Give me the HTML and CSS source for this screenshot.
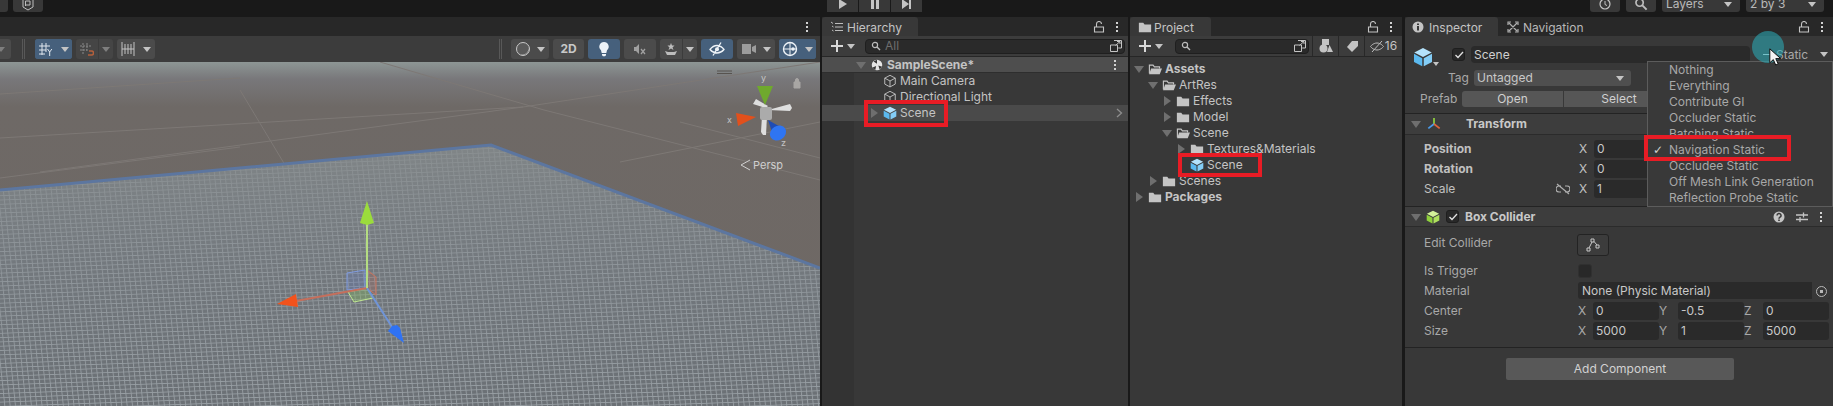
FILE: index.html
```html
<!DOCTYPE html>
<html lang="en">
<head>
<meta charset="utf-8">
<title>Unity Editor</title>
<link rel="stylesheet" href="styles.css">
</head>
<body>
<svg class="defs" width="0" height="0" aria-hidden="true">
  <defs>
    <symbol id="cube-blue" viewBox="0 0 16 16">
      <path fill="#b4e2fb" d="M8 .8 15 4.400 8 8 1 4.400z"/>
      <path fill="#5bb9ef" d="M.8 5.400 7.400 8.900v6.500L.8 12z"/>
      <path fill="#83cdf6" d="M15.200 5.400 8.600 8.900v6.500l6.600-3.400z"/>
    </symbol>
    <symbol id="cube-green" viewBox="0 0 16 16">
      <path fill="#d3f29a" d="M8 .8 15 4.400 8 8 1 4.400z"/>
      <path fill="#8fd13c" d="M.8 5.400 7.400 8.900v6.500L.8 12z"/>
      <path fill="#aee05e" d="M15.200 5.400 8.600 8.900v6.500l6.600-3.400z"/>
    </symbol>
    <symbol id="cube-line" viewBox="0 0 16 16">
      <path fill="none" stroke="#bdbdbd" stroke-width="1.100" d="M8 1.500 14 4.700V11.500L8 14.800 2 11.500V4.700zM2 4.700 8 8l6-3.300M8 8v6.800"/>
    </symbol>
    <symbol id="folder" viewBox="0 0 16 16">
      <path fill="#c4c4c4" d="M1 3h5l1.500 2H15v9H1z"/>
    </symbol>
    <symbol id="folder-open" viewBox="0 0 16 16">
      <path fill="none" stroke="#c4c4c4" stroke-width="1.300" d="M1.600 13V3.600h4.200L7.300 5.500h5.900v2"/>
      <path fill="#c4c4c4" d="M3.600 7.500H16L13.400 14H1.200z"/>
    </symbol>
    <symbol id="lock" viewBox="0 0 12 12">
      <path fill="none" stroke="#c4c4c4" stroke-width="1.100" d="M1.500 6h9v5h-9zM3.500 6V3a2.500 2.500 0 0 1 5 0"/>
    </symbol>
    <symbol id="dots" viewBox="0 0 4 12">
      <path fill="#d2d2d2" d="M1 1h2v2H1zM1 5h2v2H1zM1 9h2v2H1z"/>
    </symbol>
    <symbol id="plus" viewBox="0 0 14 14">
      <path fill="#d8d8d8" d="M6 1h2v5h5v2H8v5H6V8H1V6h5z"/>
    </symbol>
    <symbol id="mag" viewBox="0 0 10 10">
      <circle cx="4" cy="4" r="2.600" fill="none" stroke="#bdbdbd" stroke-width="1.200"/>
      <path stroke="#bdbdbd" stroke-width="1.400" d="m6 6 3 3"/>
    </symbol>
    <symbol id="popout" viewBox="0 0 14 14">
      <path fill="none" stroke="#c4c4c4" d="M5 1.500h7.500V9H9.200M1.500 6h7v6.500h-7zM6.500 6.500 11 2.500M8 2.500h3V5"/>
    </symbol>
  </defs>
</svg>

<header class="topbar">
  <div class="top-stub"></div>
  <div class="top-btn top-collab">
    <svg class="ic14" viewBox="0 0 14 14"><path fill="none" stroke="#bdbdbd" d="M2 1v9l5 3 5-3V1M4.500 9V4h4.500v4H5"/></svg>
  </div>
  <div class="top-play">
    <div class="play-seg"><svg class="ic10" viewBox="0 0 10 10"><path fill="#c4c4c4" d="M1 0l8 5-8 5z"/></svg></div>
    <div class="play-seg"><svg class="ic10" viewBox="0 0 10 10"><path fill="#c4c4c4" d="M1 0h3v10H1zM6 0h3v10H6z"/></svg></div>
    <div class="play-seg"><svg class="ic10" viewBox="0 0 10 10"><path fill="#c4c4c4" d="M0 0l7 5-7 5zM7 0h2v10H7z"/></svg></div>
  </div>
  <div class="top-btn top-history">
    <svg class="ic14" viewBox="0 0 14 14"><circle cx="7" cy="7" r="5" fill="none" stroke="#c4c4c4" stroke-width="1.200"/><path stroke="#c4c4c4" fill="none" d="M7 4v3.500l2 1"/></svg>
  </div>
  <div class="top-btn top-search">
    <svg class="ic14" viewBox="0 0 14 14"><use href="#mag"/></svg>
  </div>
  <div class="top-btn top-drop top-layers"><span>Layers</span><i class="tri-down"></i></div>
  <div class="top-btn top-drop top-layout"><span>2 by 3</span><i class="tri-down"></i></div>
</header>

<main class="workspace">
  <section class="panel panel-scene">
    <div class="tabstrip tabstrip-scene">
      <svg class="dots" ><use href="#dots"/></svg>
    </div>
    <div class="scene-tools">
      <div class="tb tb-stub"><i class="tri-down tri-dim"></i></div>
      <div class="tb-divider div-left"></div>
      <div class="tb tb-split tb-on tb-grid">
        <span class="seg seg-main"><svg class="ic14" viewBox="0 0 14 14"><path fill="none" stroke="#dfe6ee" d="M3 1v12M7 1v9M0 4h11M0 8h7M0 12h6M8.500 7l2.200 3 2.200-3M10.700 10v4"/></svg></span>
        <span class="seg seg-arrow"><i class="tri-down"></i></span>
      </div>
      <div class="tb tb-split tb-dim tb-snap">
        <span class="seg seg-main"><svg class="ic14" viewBox="0 0 14 14"><path fill="none" stroke="#8a8a8a" stroke-dasharray="2 1" d="M3 1v12M7 1v9M0 4h11M0 8h7"/><path fill="none" stroke="#b5603c" stroke-width="1.500" d="M9 9h2.500a1.800 1.800 0 0 1 0 4H8"/></svg></span>
        <span class="seg seg-arrow"><i class="tri-down tri-dim"></i></span>
      </div>
      <div class="tb tb-split tb-ruler">
        <span class="seg seg-main"><svg class="ic16" viewBox="0 0 16 14"><path fill="none" stroke="#c4c4c4" d="M2 0v14M14 0v14M5 2v10M8 2v10M11 2v10M2 7h12"/></svg></span>
        <span class="seg seg-arrow"><i class="tri-down"></i></span>
      </div>
      <div class="tb-spacer"></div>
      <div class="tb-divider div-right"></div>
      <div class="tb tb-wide tb-shade">
        <svg class="ic16" viewBox="0 0 16 16"><circle cx="8" cy="8" r="6.500" fill="#5a5a5a" stroke="#c8c8c8"/><path fill="#c8c8c8" d="M5 13.200a6.500 6.500 0 0 0 9-7.500 7 7 0 0 1-9 7.500z"/></svg>
        <i class="tri-down"></i>
      </div>
      <div class="tb tb-2d">2D</div>
      <div class="tb tb-on tb-icon">
        <svg class="ic16" viewBox="0 0 16 16"><path fill="#eef3f8" d="M8 1a4.700 4.700 0 0 1 3 8.300L10.300 12H5.700L5 9.300A4.700 4.700 0 0 1 8 1zM6 13h4v1.200l-1 1H7l-1-1z"/></svg>
      </div>
      <div class="tb tb-icon">
        <svg class="ic14" viewBox="0 0 14 14"><path fill="#a0a0a0" d="M1 5h2l3-3v10L3 9H1z"/><path stroke="#a0a0a0" stroke-width="1.300" d="m8 7 4 5m0-5-4 5"/></svg>
      </div>
      <div class="tb tb-split tb-fx">
        <span class="seg seg-main"><svg class="ic14" viewBox="0 0 14 14"><path fill="#bdbdbd" d="M7 1l1 2.500h2.500l-2 2 1 2.500L7 6.500 4.500 8l1-2.500-2-2H6zM1 9l3 1h6l3-1-2 4H3z"/></svg></span>
        <span class="seg seg-arrow"><i class="tri-down"></i></span>
      </div>
      <div class="tb tb-on tb-icon">
        <svg class="ic16" viewBox="0 0 16 16"><path fill="none" stroke="#eef3f8" stroke-width="1.300" d="M1 8.500s3-4 7-4 7 4 7 4-3 3.500-7 3.500-7-3.500-7-3.500zM12 1.500 4 14.500"/><circle cx="8" cy="8.300" r="2" fill="#eef3f8"/></svg>
      </div>
      <div class="tb tb-wide tb-cam">
        <svg class="ic16" viewBox="0 0 16 14"><path fill="#9c9c9c" d="M1 2h9v10H1zM11 5l4-2v8l-4-2z"/></svg>
        <i class="tri-down"></i>
      </div>
      <div class="tb tb-split tb-on tb-gizmo">
        <span class="seg seg-main"><svg class="ic16" viewBox="0 0 16 16"><circle cx="8" cy="8" r="6.500" fill="none" stroke="#eef3f8" stroke-width="1.400"/><path fill="none" stroke="#eef3f8" d="M1.500 8h13M8 1.500v13"/><circle cx="11" cy="8" r="1.800" fill="#eef3f8"/></svg></span>
        <span class="seg seg-arrow"><i class="tri-down"></i></span>
      </div>
    </div>
    <div class="viewport">
      <svg class="scene-canvas" viewBox="0 0 820 344" width="820" height="344">
        <defs>
          <linearGradient id="sky" x1="0" y1="0" x2="0" y2="1">
            <stop offset="0" stop-color="#8d9694"/>
            <stop offset=".05" stop-color="#78777a"/>
            <stop offset=".13" stop-color="#6e6966"/>
            <stop offset="1" stop-color="#6f6864"/>
          </linearGradient>
          <pattern id="mesh" width="5.300" height="4.300" patternUnits="userSpaceOnUse" patternTransform="skewY(-2) skewX(6)">
            <rect width="5.300" height="4.300" fill="#6b7075"/>
            <path stroke="#989fa4" stroke-width=".9" fill="none" d="M0 .5h5.300M.5 0v4.300"/>
          </pattern>
          <linearGradient id="haze" x1="0" y1="0" x2="0" y2="1">
            <stop offset="0" stop-color="#868b8c" stop-opacity=".8"/>
            <stop offset=".45" stop-color="#80868b" stop-opacity=".4"/>
            <stop offset="1" stop-color="#787f85" stop-opacity="0"/>
          </linearGradient>
        </defs>
        <rect class="sky" width="820" height="344"/>
        <g class="floor-lines">
          <path d="M0 76 523 45M523 45 820 0M240 28 285 103M0 32 240 16M544 48 820 118M380 0 544 48M40 110 523 45M620 100 820 60M680 60 820 96M0 116 240 85"/>
        </g>
        <polygon class="mesh" points="0,128 491,83 820,206 820,344 0,344"/>
        <polygon class="haze" points="0,128 491,83 820,206 820,344 0,344"/>
        <polyline class="mesh-edge" points="0,128 491,83 820,206"/>

        <g class="handles">
          <polygon class="plane-z" points="347,211 365,208 365,226 347,228"/>
          <polygon class="plane-x" points="367,208 376,215 376,233 367,226"/>
          <polygon class="plane-y" points="348,230 367,226 373,236 354,240"/>
          <line class="axis-x" x1="367" y1="226" x2="296" y2="239"/>
          <line class="axis-z" x1="367" y1="226" x2="394" y2="268"/>
          <line class="axis-y" x1="367" y1="226" x2="367" y2="160"/>
          <polygon class="head-y" points="367,139 374,161 367,163 360,161"/>
          <polygon class="head-x" points="277,242 296,232 298,245"/>
          <polygon class="head-z" points="404,281 388,269 392,264 397,263 400,266"/>
        </g>

        <g class="orient">
          <path class="bar" d="M717 9h15M717 11.500h15"/>
          <path class="orient-lock" d="M794 20h6v6h-6zM795.500 20v-2a1.500 1.500 0 0 1 3 0v2"/>
          <polygon class="arm" points="766,46 753,42 756,37 768,44"/>
          <polygon class="arm" points="768,48 790,42 792,46 790,49"/>
          <polygon class="arm" points="762,54 767,54 766,73 763,73 761,70"/>
          <rect class="hub" x="760" y="45" width="12" height="13" rx="2"/>
          <polygon class="cone-y" points="757,24 773,24 765,43"/>
          <polygon class="cone-x" points="736,51 756,55 738,64"/>
          <polygon class="cone-z" points="768,58 786,68 774,76"/>
          <ellipse class="cone-z-cap" cx="778" cy="71" rx="8.500" ry="7" transform="rotate(-32 778 71)"/>
          <text class="axis-label" x="761" y="19">y</text>
          <text class="axis-label" x="727" y="61">x</text>
          <text class="axis-label" x="781" y="84">z</text>
          <path class="persp-mark" d="M750 98 741 103 750 108"/>
          <text class="persp" x="753" y="107">Persp</text>
        </g>
      </svg>
    </div>
  </section>

  <section class="panel panel-hier">
    <div class="tabstrip">
      <div class="tab tab-hier">
        <svg class="ic12" viewBox="0 0 12 12"><path stroke="#bdbdbd" fill="none" d="M4 2.500h8M4 6h8M4 9.500h8M0 1l2 1.500M1 5l1.500 1M1 9l1.500 1"/></svg>
        <span>Hierarchy</span>
      </div>
      <div class="tab-tools">
        <svg class="lock"><use href="#lock"/></svg>
        <svg class="dots"><use href="#dots"/></svg>
      </div>
    </div>
    <div class="panel-tools">
      <div class="add-btn"><svg class="ic14"><use href="#plus"/></svg><i class="tri-down"></i></div>
      <div class="search search-hier">
        <svg class="ic10"><use href="#mag"/></svg>
        <span class="search-text">All</span>
        <svg class="ic14 search-pop"><use href="#popout"/></svg>
      </div>
    </div>
    <div class="hier-list">
      <div class="row scene-head">
        <i class="tri-row tri-open"></i>
        <svg class="ricon" viewBox="0 0 16 16"><circle cx="8" cy="8" r="6" fill="#e6e6e6"/><path fill="#383838" d="M8 2v4.500L4 4zM14 10l-4.500-1.500L11 13zM2.500 11l4.500-2-1 5z"/></svg>
        <span class="strong">SampleScene*</span>
        <svg class="dots row-dots"><use href="#dots"/></svg>
      </div>
      <div class="row h1"><i class="tri-row tri-none"></i><svg class="ricon"><use href="#cube-line"/></svg><span>Main Camera</span></div>
      <div class="row h1"><i class="tri-row tri-none"></i><svg class="ricon"><use href="#cube-line"/></svg><span>Directional Light</span></div>
      <div class="row h1 row-hover">
        <i class="tri-row tri-closed"></i><svg class="ricon"><use href="#cube-blue"/></svg><span>Scene</span>
        <svg class="row-chevron" viewBox="0 0 7 10"><path fill="none" stroke="#8e8e8e" stroke-width="1.300" d="m1 1 4.500 4L1 9"/></svg>
      </div>
      <div class="mark mark-hier"></div>
    </div>
  </section>

  <section class="panel panel-project">
    <div class="tabstrip">
      <div class="tab tab-proj">
        <svg class="ic14"><use href="#folder"/></svg>
        <span>Project</span>
      </div>
      <div class="tab-tools">
        <svg class="lock"><use href="#lock"/></svg>
        <svg class="dots"><use href="#dots"/></svg>
      </div>
    </div>
    <div class="panel-tools">
      <div class="add-btn"><svg class="ic14"><use href="#plus"/></svg><i class="tri-down"></i></div>
      <div class="search search-proj">
        <svg class="ic10"><use href="#mag"/></svg>
        <span class="search-text"></span>
        <svg class="ic14 search-pop"><use href="#popout"/></svg>
      </div>
      <div class="filter-btn"><svg class="ic14" viewBox="0 0 14 14"><path fill="#c4c4c4" d="M3 0h7v6H3z"/><circle cx="4.500" cy="9.500" r="4" fill="#c4c4c4"/><path fill="#c4c4c4" d="m10.500 6 3.500 7H8z"/></svg></div>
      <div class="filter-btn"><svg class="ic14" viewBox="0 0 14 14"><path fill="#c4c4c4" d="M7 2h6v5l-6 6-5-5z"/></svg></div>
      <div class="filter-btn filter-hidden">
        <svg class="ic14" viewBox="0 0 14 14"><path fill="none" stroke="#bdbdbd" d="M.5 7.500S3 4 7 4s6.500 3.500 6.500 3.500S11 11 7 11 .5 7.500.5 7.500zM12 2 2 13"/></svg>
        <span>16</span>
      </div>
    </div>
    <div class="tree">
      <div class="row t0"><i class="tri-row tri-open"></i><svg class="ricon"><use href="#folder-open"/></svg><span class="strong">Assets</span></div>
      <div class="row t1"><i class="tri-row tri-open"></i><svg class="ricon"><use href="#folder-open"/></svg><span>ArtRes</span></div>
      <div class="row t2"><i class="tri-row tri-closed"></i><svg class="ricon"><use href="#folder"/></svg><span>Effects</span></div>
      <div class="row t2"><i class="tri-row tri-closed"></i><svg class="ricon"><use href="#folder"/></svg><span>Model</span></div>
      <div class="row t2"><i class="tri-row tri-open"></i><svg class="ricon"><use href="#folder-open"/></svg><span>Scene</span></div>
      <div class="row t3"><i class="tri-row tri-closed"></i><svg class="ricon"><use href="#folder"/></svg><span>Textures&amp;Materials</span></div>
      <div class="row t3"><i class="tri-row tri-none"></i><svg class="ricon"><use href="#cube-blue"/></svg><span>Scene</span></div>
      <div class="row t1"><i class="tri-row tri-closed"></i><svg class="ricon"><use href="#folder"/></svg><span>Scenes</span></div>
      <div class="row t0"><i class="tri-row tri-closed"></i><svg class="ricon"><use href="#folder"/></svg><span class="strong">Packages</span></div>
      <div class="mark mark-proj"></div>
    </div>
  </section>

  <section class="panel panel-insp">
    <div class="tabstrip">
      <div class="tab tab-insp">
        <svg class="ic12" viewBox="0 0 12 12"><circle cx="6" cy="6" r="5.500" fill="#c4c4c4"/><path fill="#383838" d="M5 2.500h2v1.500H5zM5 5h2v4.500H5z"/></svg>
        <span>Inspector</span>
      </div>
      <div class="tab-plain">
        <svg class="ic12" viewBox="0 0 12 12"><path fill="none" stroke="#b0b0b0" stroke-width="1.200" d="M1 4V1h3M8 1h3v3M11 8v3H8M4 11H1V8M2 2l8 8M10 2 2 10"/></svg>
        <span>Navigation</span>
      </div>
      <div class="tab-tools">
        <svg class="lock"><use href="#lock"/></svg>
        <svg class="dots"><use href="#dots"/></svg>
      </div>
    </div>

    <div class="obj-head">
      <div class="obj-main">
        <svg class="obj-cube"><use href="#cube-blue"/></svg>
        <i class="tri-down obj-tri"></i>
        <div class="check check-on"><svg viewBox="0 0 10 10"><path fill="none" stroke="#e0e0e0" stroke-width="1.300" d="m1.500 5 2.500 2.500 5-5.500"/></svg></div>
        <div class="name-field">Scene</div>
        <div class="static-wrap"><span class="static-dash"></span><span>Static</span><i class="tri-down"></i></div>
      </div>
      <div class="obj-tag">
        <span class="tag-label">Tag</span>
        <div class="drop">Untagged<i class="tri-down"></i></div>
      </div>
      <div class="obj-prefab">
        <span class="prefab-label">Prefab</span>
        <div class="pf-btn pf-open">Open</div>
        <div class="pf-btn pf-select">Select</div>
      </div>
    </div>

    <div class="comp-head comp-transform">
      <i class="tri-row tri-open"></i>
      <svg class="ic14 comp-icon" viewBox="0 0 16 16"><path stroke-width="2" d="M8 8V1" stroke="#8fce3f"/><path stroke-width="2" d="M8 8 1.500 13" stroke="#4a9bea"/><path stroke-width="2" d="M8 8l6.500 5" stroke="#e0643c"/></svg>
      <span class="comp-title comp-title-t">Transform</span>
    </div>
    <div class="vec-rows">
      <div class="vec"><span class="vec-label strong">Position</span><div class="xyz"><span class="axis">X</span><span class="fld">0</span><span class="axis">Y</span><span class="fld">0</span><span class="axis">Z</span><span class="fld">0</span></div></div>
      <div class="vec"><span class="vec-label strong">Rotation</span><div class="xyz"><span class="axis">X</span><span class="fld">0</span><span class="axis">Y</span><span class="fld">0</span><span class="axis">Z</span><span class="fld">0</span></div></div>
      <div class="vec"><span class="vec-label">Scale</span>
        <svg class="unlink" viewBox="0 0 14 12"><path fill="none" stroke="#b0b0b0" stroke-width="1.200" d="M5 3H3a3 3 0 0 0 0 6h2M9 3h2a3 3 0 0 1 0 6H9M1 1l12 10"/></svg>
        <div class="xyz"><span class="axis">X</span><span class="fld">1</span><span class="axis">Y</span><span class="fld">1</span><span class="axis">Z</span><span class="fld">1</span></div></div>
    </div>

    <div class="comp-head comp-box">
      <i class="tri-row tri-open"></i>
      <svg class="ic14 comp-cube"><use href="#cube-green"/></svg>
      <div class="check check-on check-box"><svg viewBox="0 0 10 10"><path fill="none" stroke="#e0e0e0" stroke-width="1.300" d="m1.500 5 2.500 2.500 5-5.500"/></svg></div>
      <span class="comp-title">Box Collider</span>
      <div class="comp-tools">
        <svg class="ic12" viewBox="0 0 12 12"><circle cx="6" cy="6" r="5.500" fill="#c4c4c4"/><path fill="none" stroke="#383838" stroke-width="1.500" d="M4 4.500a2 2 0 1 1 3 1.700c-.7.400-1 .7-1 1.500"/><path fill="#383838" d="M5.200 8.500h1.600V10H5.200z"/></svg>
        <svg class="ic12" viewBox="0 0 12 12"><path stroke="#c4c4c4" stroke-width="1.300" fill="none" d="M0 4h12M0 8.500h12M7.500 1.500v5M4 6v5"/></svg>
        <svg class="dots"><use href="#dots"/></svg>
      </div>
    </div>
    <div class="box-body">
      <div class="box-edit">
        <span class="box-label">Edit Collider</span>
        <div class="edit-btn"><svg class="ic14" viewBox="0 0 14 14"><path fill="none" stroke="#c8c8c8" d="M1 10h3v3H1zM5 1h3v3H5zM10 7h3v3h-3zM3 10l3-6M8 3.500 11 7"/></svg></div>
      </div>
      <div class="box-trigger">
        <span class="box-label">Is Trigger</span>
        <div class="check check-off"></div>
      </div>
      <div class="box-mat">
        <span class="box-label">Material</span>
        <div class="obj-field"><span>None (Physic Material)</span><i class="obj-pick"></i></div>
      </div>
      <div class="box-vec">
        <span class="box-label">Center</span>
        <div class="xyz xyz-wide"><span class="axis">X</span><span class="fld">0</span><span class="axis">Y</span><span class="fld">-0.5</span><span class="axis">Z</span><span class="fld">0</span></div>
      </div>
      <div class="box-vec">
        <span class="box-label">Size</span>
        <div class="xyz xyz-wide"><span class="axis">X</span><span class="fld">5000</span><span class="axis">Y</span><span class="fld">1</span><span class="axis">Z</span><span class="fld">5000</span></div>
      </div>
    </div>
    <div class="add-wrap">
      <div class="add-component">Add Component</div>
    </div>

    <div class="menu">
      <div class="menu-item">Nothing</div>
      <div class="menu-item">Everything</div>
      <div class="menu-item">Contribute GI</div>
      <div class="menu-item">Occluder Static</div>
      <div class="menu-item">Batching Static</div>
      <div class="menu-item menu-checked">Navigation Static</div>
      <div class="menu-item">Occludee Static</div>
      <div class="menu-item">Off Mesh Link Generation</div>
      <div class="menu-item">Reflection Probe Static</div>
    </div>
    <div class="mark mark-menu"></div>
    <div class="click-ring"></div>
    <svg class="cursor" viewBox="0 0 13 18"><path fill="#f4f4f4" stroke="#111" stroke-width="1" d="M.8.8v14l3.500-3.200 2.400 5.400 2.500-1.100-2.400-5.300h4.900z"/></svg>
  </section>
</main>
</body>
</html>
```
FILE: styles.css
```css
* { box-sizing: border-box; }
html, body { margin: 0; padding: 0; }
body {
  width: 1833px;
  height: 406px;
  overflow: hidden;
  background: #191919;
  color: #c4c4c4;
  font-family: "Inter", "Liberation Sans", sans-serif;
  font-size: 12px;
  line-height: 16px;
  display: flex;
  flex-direction: column;
}
.defs { position: absolute; }
svg { display: block; flex: none; }
i { display: block; flex: none; }
.ic10 { width: 10px; height: 10px; }
.ic12 { width: 12px; height: 12px; }
.ic14 { width: 14px; height: 14px; }
.ic16 { width: 16px; height: 16px; }
.strong { font-weight: 700; }

.tri-down {
  width: 0; height: 0;
  border-left: 4px solid transparent;
  border-right: 4px solid transparent;
  border-top: 5px solid #c4c4c4;
}
.tri-dim { border-top-color: #7e7e7e; }

/* top bar */
.topbar {
  height: 17px;
  flex: none;
  display: flex;
  align-items: flex-end;
  padding-bottom: 5px;
  background: #191919;
  overflow: hidden;
}
.top-stub { width: 8px; height: 16px; background: #383838; border-radius: 0 3px 3px 0; flex: none; }
.top-btn {
  height: 16px;
  background: #383838;
  border-radius: 3px;
  display: flex;
  align-items: center;
  justify-content: center;
  flex: none;
}
.top-collab { width: 30px; margin-left: 5px; }
.top-play { display: flex; gap: 1px; margin-left: 784px; flex: none; }
.play-seg { width: 31px; height: 16px; background: #383838; display: flex; align-items: center; justify-content: center; }
.top-history { width: 30px; margin-left: 668px; }
.top-search { width: 30px; margin-left: 6px; }
.top-drop { justify-content: space-between; padding: 0 8px 0 4px; margin-left: 6px; color: #b8b8b8; }
.top-layers { width: 78px; }
.top-layout { width: 78px; }

/* workspace */
.workspace { flex: 1; display: flex; min-height: 0; }
.panel { position: relative; background: #383838; flex: none; display: flex; flex-direction: column; }
.panel-scene { width: 820px; }
.panel-hier { width: 306px; margin-left: 2px; }
.panel-project { width: 272px; margin-left: 2px; }
.panel-insp { width: 428px; margin-left: 3px; overflow: hidden; }

.tabstrip {
  height: 19px;
  flex: none;
  background: #282828;
  display: flex;
  align-items: stretch;
}
.tabstrip-scene { justify-content: flex-end; align-items: center; padding-right: 11px; }
.dots { width: 4px; height: 12px; }
.lock { width: 12px; height: 12px; }
.tab {
  background: #383838;
  display: flex;
  align-items: center;
  border-radius: 3px 3px 0 0;
  flex: none;
}
.tab span, .tab-plain span { position: relative; top: 1px; }
.tab-hier { width: 96px; padding-left: 9px; gap: 4px; }
.tab-proj { width: 81px; padding-left: 8px; gap: 2px; }
.tab-insp { width: 93px; padding-left: 7px; gap: 5px; }
.tab-plain { display: flex; align-items: center; gap: 4px; margin-left: 9px; color: #b8b8b8; }
.tab-tools { margin-left: auto; display: flex; align-items: center; gap: 10px; padding-right: 9px; }

/* scene toolbar */
.scene-tools {
  height: 26px;
  flex: none;
  background: #3c3c3c;
  display: flex;
  align-items: center;
  padding-right: 4px;
  gap: 4px;
}
.tb {
  height: 20px;
  background: #4b4b4b;
  border-radius: 3px;
  display: flex;
  align-items: center;
  justify-content: center;
  flex: none;
}
.tb-stub { width: 11px; border-radius: 0 3px 3px 0; margin-right: 7px; justify-content: flex-start; }
.tb-stub .tri-down { margin-left: -3px; }
.tb-divider { width: 3px; height: 20px; border-left: 1px solid #585858; border-right: 1px solid #585858; flex: none; }
.div-left { margin-right: 6px; }
.div-right { margin-right: 5px; }
.tb-spacer { flex: 1; }
.tb-split { justify-content: flex-start; gap: 1px; background: transparent; }
.seg { height: 20px; display: flex; align-items: center; justify-content: center; background: #4b4b4b; }
.seg-main { width: 22px; border-radius: 3px 0 0 3px; }
.seg-arrow { flex: 1; border-radius: 0 3px 3px 0; }
.tb-on { background: #46607c; }
.tb-on .seg { background: #46607c; }
.tb-dim .seg { background: #454545; }
.tb-grid, .tb-snap, .tb-gizmo { width: 37px; }
.tb-ruler { width: 38px; gap: 0; }
.tb-fx { width: 37px; }
.tb-wide { width: 38px; gap: 6px; }
.tb-2d { width: 31px; font-weight: 700; color: #c8c8c8; }
.tb-icon { width: 32px; }

/* viewport */
.viewport { flex: 1; min-height: 0; overflow: hidden; }
.sky { fill: url(#sky); }
.floor-lines path { stroke: #7d7875; stroke-width: 1; fill: none; }
.mesh { fill: url(#mesh); }
.haze { fill: url(#haze); }
.mesh-edge { fill: none; stroke: #5c76a0; stroke-width: 3; }
.axis-x { stroke: #c56f5c; stroke-width: 2; }
.axis-z { stroke: #6f94d8; stroke-width: 2; }
.axis-y { stroke: #b4dc82; stroke-width: 2; }
.plane-z { fill: rgba(90,120,230,.18); stroke: #7f9be0; }
.plane-x { fill: rgba(220,90,60,.15); stroke: #c9735c; }
.plane-y { fill: rgba(140,210,80,.25); stroke: #c0e890; }
.head-y { fill: #9bdc3c; }
.head-x { fill: #f2521c; }
.head-z { fill: #2f72f4; }
.bar { stroke: #57534f; stroke-width: 1; fill: none; }
.orient-lock { fill: #a8a6a4; stroke: #a8a6a4; }
.arm { fill: #dedede; }
.hub { fill: #ababab; }
.cone-y { fill: #6fa92d; }
.cone-x { fill: #e2501c; }
.cone-z { fill: #1f4cb4; }
.cone-z-cap { fill: #2f75f2; }
.axis-label { fill: #c4c4c4; font-size: 9px; }
.persp-mark { fill: none; stroke: #d0d0d0; stroke-width: 1; }
.persp { fill: #cfcfcf; font-size: 11px; }

/* shared panel toolbar */
.panel-tools {
  height: 21px;
  flex: none;
  display: flex;
  align-items: center;
  border-bottom: 1px solid #262626;
  background: #3c3c3c;
}
.add-btn { display: flex; align-items: center; gap: 3px; width: 30px; margin-left: 8px; flex: none; }
.search {
  height: 15px;
  background: #2a2a2a;
  border: 1px solid #1f1f1f;
  border-radius: 4px;
  display: flex;
  align-items: center;
  padding-left: 5px;
  gap: 4px;
  color: #6e6e6e;
  flex: none;
}
.search-hier { width: 260px; margin-left: 5px; }
.search-proj { width: 134px; margin-left: 7px; }
.search-text { flex: 1; }
.search-pop { margin-right: 1px; }
.filter-btn {
  height: 20px;
  width: 26px;
  border-left: 1px solid #282828;
  display: flex;
  align-items: center;
  justify-content: center;
  flex: none;
}
.search-proj + .filter-btn { margin-left: 3px; }
.filter-hidden { width: 38px; gap: 1px; font-size: 12px; }

/* lists */
.row { height: 16px; display: flex; align-items: center; white-space: nowrap; position: relative; }
.tri-row { width: 12px; height: 12px; flex: none; position: relative; }
.tri-open::after {
  content: ""; position: absolute; left: 1px; top: 3px;
  border-left: 5px solid transparent; border-right: 5px solid transparent;
  border-top: 7px solid #6f6f6f;
}
.tri-closed::after {
  content: ""; position: absolute; left: 3px; top: 1px;
  border-top: 5px solid transparent; border-bottom: 5px solid transparent;
  border-left: 7px solid #6f6f6f;
}
.ricon { width: 14px; height: 14px; margin: 0 3px; flex: none; }

.hier-list {
  flex: 1;
  position: relative;
  background: linear-gradient(90deg, #333 32px, #383838 32px);
}
.scene-head { height: 15px; padding-left: 33px; background: #4e4e4e; border-bottom: 1px solid #2e2e2e; box-sizing: content-box; }
.row-dots { position: absolute; right: 11px; top: 2px; }
.h1 { padding-left: 46px; }
.row-hover { background: #4a4a4a; }
.row-chevron { width: 7px; height: 10px; position: absolute; right: 5px; top: 3px; }

.tree { flex: 1; position: relative; padding-top: 4px; }
.t0 { padding-left: 3px; }
.t1 { padding-left: 17px; }
.t2 { padding-left: 31px; }
.t3 { padding-left: 45px; }

/* red marks */
.mark { position: absolute; border: 4px solid #e81c25; pointer-events: none; }
.mark-hier { left: 42px; top: 43px; width: 84px; height: 27px; }
.mark-proj { left: 48px; top: 96px; width: 84px; height: 24px; }
.mark-menu { left: 239px; top: 118px; width: 147px; height: 26px; }

/* inspector */
.obj-head { height: 77px; flex: none; padding-top: 10px; }
.obj-main { display: flex; align-items: center; height: 17px; padding-left: 8px; position: relative; }
.obj-cube { width: 20px; height: 20px; margin-top: 4px; flex: none; }
.obj-tri { position: absolute; left: 28px; top: 16px; border-left-width: 3px; border-right-width: 3px; border-top-width: 4px; }
.check { width: 13px; height: 13px; border-radius: 3px; flex: none; display: flex; align-items: center; justify-content: center; }
.check svg { width: 10px; height: 10px; }
.check-on { background: #282828; border: 1px solid #1e1e1e; margin-left: 19px; }
.check-off { background: #282828; border: 1px solid #303030; width: 14px; height: 14px; }
.name-field {
  width: 279px; height: 17px; margin-left: 6px;
  background: #2a2a2a; border-radius: 4px;
  padding-left: 3px; line-height: 17px; color: #d0d0d0;
  flex: none;
}
.static-wrap { display: flex; align-items: center; margin-left: 13px; color: #a8a8a8; flex: 1; padding-right: 5px; }
.static-dash { width: 9px; height: 1.500px; background: #d8d8d8; margin-right: 4px; }
.static-wrap .tri-down { margin-left: auto; }
.obj-tag { display: flex; align-items: center; margin-top: 7px; height: 16px; padding-left: 43px; }
.tag-label { width: 26px; color: #a8a8a8; }
.drop {
  width: 157px; height: 16px; background: #4f4f4f; border-radius: 3px;
  padding: 0 7px 0 3px; display: flex; align-items: center; justify-content: space-between; color: #c8c8c8;
}
.obj-prefab { display: flex; align-items: center; margin-top: 5px; height: 16px; padding-left: 15px; }
.prefab-label { width: 42px; color: #a8a8a8; }
.pf-btn { height: 16px; background: #565656; text-align: center; color: #d0d0d0; flex: none; }
.pf-open { width: 101px; border-radius: 3px 0 0 3px; margin-right: 1px; }
.pf-select { width: 110px; }

.comp-head {
  display: flex; align-items: center; flex: none;
  border-top: 1px solid #232323; border-bottom: 1px solid #2b2b2b;
  background: #3d3d3d; padding-left: 5px;
}
.comp-transform { height: 22px; }
.comp-box { height: 21px; }
.comp-icon { margin-left: 5px; }
.comp-cube { margin-left: 4px; }
.comp-title { font-weight: 700; color: #c8c8c8; margin-left: 6px; }
.comp-title-t { margin-left: 25px; }
.check-box { margin-left: 6px; }
.comp-tools { margin-left: auto; display: flex; align-items: center; gap: 11px; padding-right: 10px; }

.vec-rows { height: 71px; flex: none; padding-top: 5px; display: flex; flex-direction: column; gap: 2px; }
.vec { height: 18px; display: flex; align-items: center; padding-left: 19px; position: relative; }
.vec-label { color: #c0c0c0; }
.vec .xyz { position: absolute; left: 174px; top: 0; }
.unlink { width: 14px; height: 12px; position: absolute; left: 151px; top: 3px; }
.xyz { display: grid; grid-template-columns: 15px 66px 19px 66px 19px 66px; height: 18px; align-items: center; }
.axis { color: #a8a8a8; }
.vec .axis:first-child { color: #c0c0c0; }
.fld {
  height: 18px; background: #2a2a2a; border-radius: 3px;
  padding-left: 3px; line-height: 18px; color: #c8c8c8;
}

.box-body { flex: none; position: relative; height: 121px; border-bottom: 1px solid #232323; }
.box-label { position: absolute; left: 19px; color: #a8a8a8; }
.box-edit { height: 36px; padding-top: 7px; padding-left: 172px; position: relative; }
.box-edit .box-label { top: 8px; }
.edit-btn {
  width: 32px; height: 22px; border: 1px solid #232323; border-radius: 3px;
  background: #3c3c3c; display: flex; align-items: center; justify-content: center;
}
.box-trigger { height: 19px; padding-left: 173px; padding-bottom: 3px; position: relative; display: flex; align-items: center; }
.box-trigger .box-label { top: 0; }
.box-mat { height: 20px; padding-left: 173px; position: relative; }
.box-mat .box-label { top: 1px; }
.obj-field {
  width: 252px; height: 17px; background: #2a2a2a; border-radius: 3px;
  display: flex; align-items: center; justify-content: space-between; padding-left: 4px; color: #c8c8c8;
}
.obj-pick {
  width: 18px; height: 17px; background: #383838; border-radius: 0 3px 3px 0; position: relative;
}
.obj-pick::after {
  content: ""; position: absolute; left: 4px; top: 4px; width: 9px; height: 9px;
  border: 1px solid #b8b8b8; border-radius: 50%;
  background: radial-gradient(circle, #b8b8b8 1.500px, transparent 2px);
}
.box-vec { height: 20px; position: relative; padding-left: 173px; }
.box-vec .box-label { top: 1px; }
.xyz-wide { grid-template-columns: 15px 66px 19px 66px 19px 66px; }

.add-wrap { display: flex; justify-content: center; padding-top: 10px; padding-left: 2px; }
.add-component {
  width: 228px; height: 22px; line-height: 22px; text-align: center;
  background: #585858; border-radius: 2px; color: #d2d2d2;
}

/* overlays */
.menu {
  position: absolute; left: 242px; top: 44px; width: 186px; height: 146px;
  background: #393939; border: 1px solid #5c5c5c;
}
.menu-item { height: 16px; padding-left: 21px; color: #a8a8a8; white-space: nowrap; position: relative; }
.menu-checked::before {
  content: "✓"; position: absolute; left: 5px; top: 0; color: #d0d0d0; font-size: 12px; font-family: "DejaVu Sans", sans-serif;
}
.click-ring {
  position: absolute; left: 347px; top: 14px; width: 32px; height: 32px;
  border-radius: 50%; background: rgba(41, 176, 190, .55);
}
.cursor { position: absolute; left: 364px; top: 31px; width: 13px; height: 18px; }
```
